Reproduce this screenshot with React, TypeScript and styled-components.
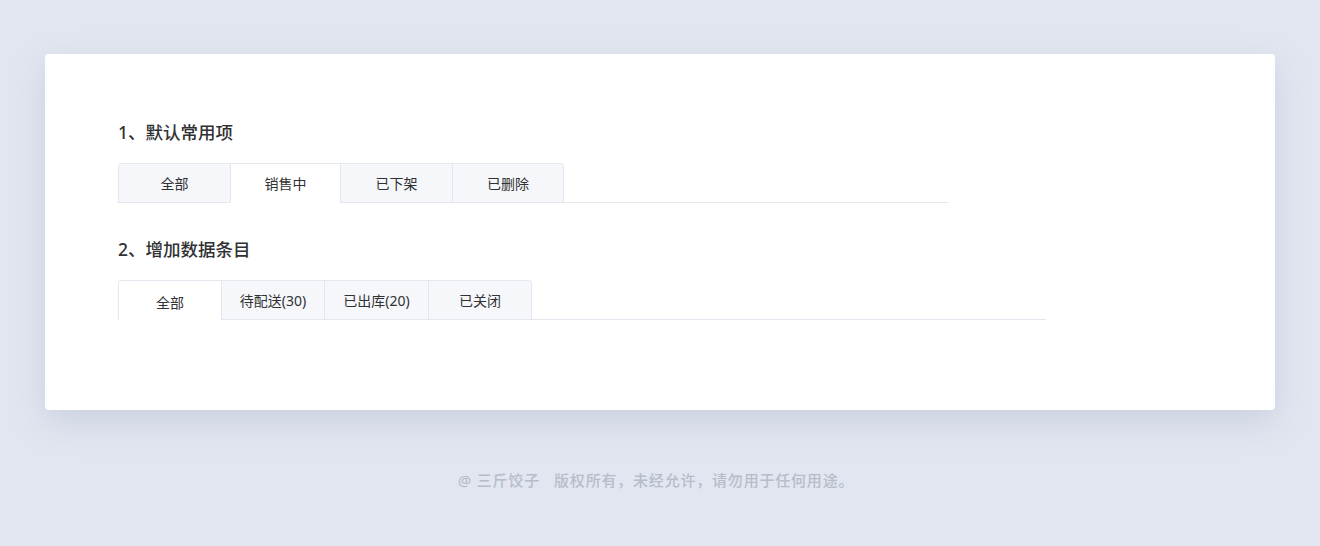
import styled, { createGlobalStyle } from 'styled-components';

const GlobalStyle = createGlobalStyle`
  html, body {
    margin: 0;
    padding: 0;
    background: #e2e6f0;
    font-family: "Helvetica Neue", "Noto Sans", "Noto Sans CJK SC", sans-serif;
  }
`;

const Page = styled.div`
  width: 1320px;
  height: 546px;
  box-sizing: border-box;
  padding: 54px 45px 0;
  display: flex;
  flex-direction: column;
`;

const Card = styled.div`
  height: 356px;
  box-sizing: border-box;
  padding: 67px 73px 0;
  background: #fff;
  border-radius: 4px;
  box-shadow: 0 12px 32px rgba(160, 170, 195, 0.35);

  display: flex;
  flex-direction: column;
  gap: 35px;
`;

const Section = styled.div`
  display: flex;
  flex-direction: column;
  gap: 20px;
`;

const Title = styled.div`
  font-size: 17.5px;
  line-height: 22px;
  font-weight: 500;
  color: #303133;
`;

interface HeaderProps {
  width: number;
}

const TabHeader = styled.div<HeaderProps>`
  width: ${(props) => props.width}px;
  border-bottom: 1px solid #e4e7ed;
  display: flex;
`;

const Nav = styled.div`
  display: flex;
  border: 1px solid #e4e7ed;
  border-bottom: none;
  border-radius: 4px 4px 0 0;
  overflow: hidden;
  margin-bottom: -1px;
`;

interface TabProps {
  active?: boolean;
  width: number;
  lowered?: boolean;
}

const Tab = styled.div<TabProps>`
  width: ${(props) => props.width}px;
  height: 39px;
  box-sizing: border-box;
  padding-top: ${(props) => (props.lowered ? 3 : 0)}px;
  display: flex;
  align-items: center;
  justify-content: center;

  font-size: 14px;
  color: #303133;
  background: ${(props) => (props.active ? '#fff' : '#f5f7fa')};
  border-bottom: 1px solid ${(props) => (props.active ? '#fff' : '#e4e7ed')};

  & + & {
    border-left: 1px solid #e4e7ed;
  }
`;

const Footer = styled.div`
  margin-top: 60px;
  text-align: center;
  font-size: 15px;
  line-height: 20px;
  font-weight: 500;
  letter-spacing: 0.8px;
  color: #b7bcc9;
  padding-right: 8px;
  white-space: pre;
`;

interface TabData {
  label: string;
  width: number;
}

const defaultTabs: TabData[] = [
  { label: '全部', width: 111 },
  { label: '销售中', width: 110 },
  { label: '已下架', width: 112 },
  { label: '已删除', width: 111 },
];

const dataTabs: TabData[] = [
  { label: '全部', width: 102 },
  { label: '待配送(30)', width: 103 },
  { label: '已出库(20)', width: 104 },
  { label: '已关闭', width: 103 },
];

const App: React.FC = () => {
  return (
    <>
      <GlobalStyle />
      <Page>
        <Card>
          <Section>
            <Title>1、默认常用项</Title>
            <TabHeader width={830}>
              <Nav>
                {defaultTabs.map((tab, i) => (
                  <Tab key={tab.label} width={tab.width} active={i === 1}>
                    {tab.label}
                  </Tab>
                ))}
              </Nav>
            </TabHeader>
          </Section>
          <Section>
            <Title>2、增加数据条目</Title>
            <TabHeader width={928}>
              <Nav>
                {dataTabs.map((tab, i) => (
                  <Tab key={tab.label} width={tab.width} active={i === 0} lowered={i === 0}>
                    {tab.label}
                  </Tab>
                ))}
              </Nav>
            </TabHeader>
          </Section>
        </Card>
        <Footer>{'@ 三斤饺子   版权所有，未经允许，请勿用于任何用途。'}</Footer>
      </Page>
    </>
  );
};

export default App;
